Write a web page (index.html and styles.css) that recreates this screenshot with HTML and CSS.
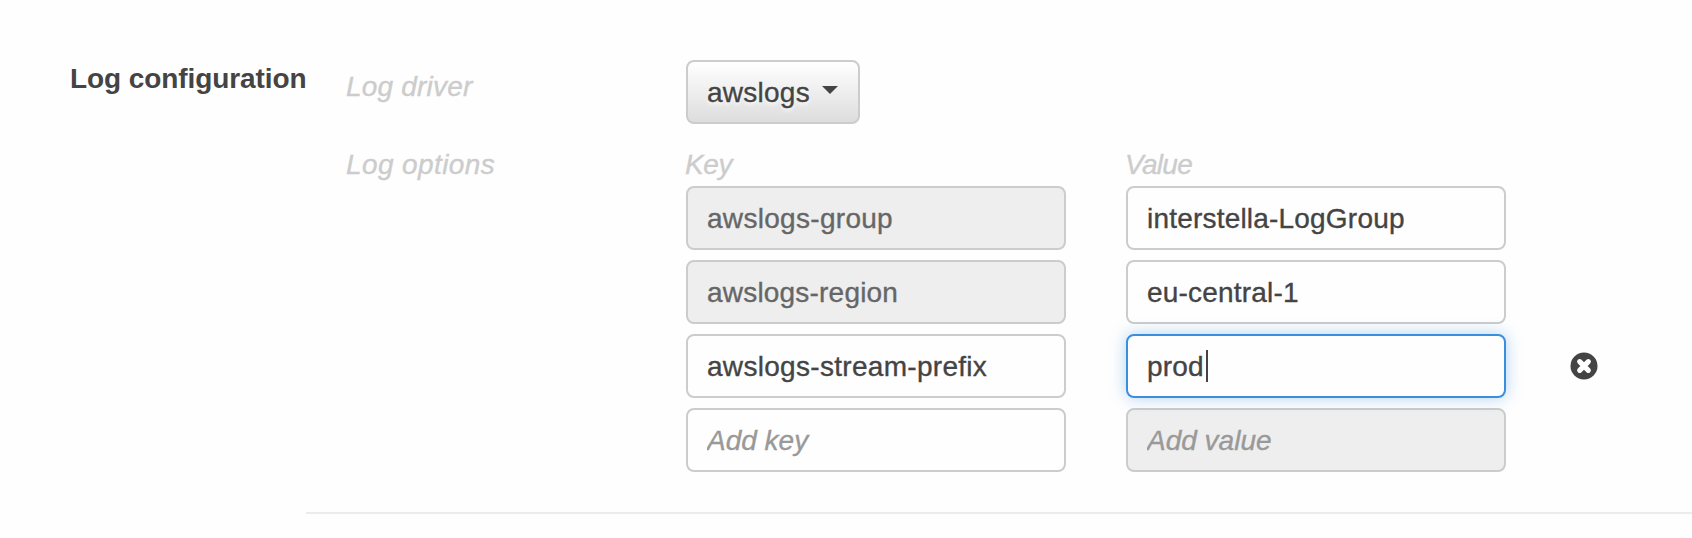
FILE: index.html
```html
<!DOCTYPE html>
<html lang="en">
<head>
<meta charset="utf-8">
<title>Log configuration</title>
<link rel="stylesheet" href="styles.css">
</head>
<body>
<section class="log-config">
  <h2 class="section-title">Log configuration</h2>
  <div class="settings">
    <div class="row driver-row">
      <div class="hint driver-label">Log driver</div>
      <button class="driver-button" type="button"><span class="driver-name">awslogs</span><svg class="arrow" width="16" height="8" viewBox="0 0 16 8"><path d="M0 0H16L8 8Z" fill="#444"/></svg></button>
    </div>
    <div class="row">
      <div class="hint options-label">Log options</div>
      <div class="options">
        <div class="hint key-head">Key</div>
        <div class="hint value-head">Value</div>
        <span></span>
        <input class="field group" value="awslogs-group" disabled>
        <input class="field interstella" value="interstella-LogGroup">
        <span></span>
        <input class="field region" value="awslogs-region" disabled>
        <input class="field central" value="eu-central-1">
        <span></span>
        <input class="field prefix" value="awslogs-stream-prefix">
        <div class="editing">
          <input class="field active" value="prod">
          <span class="caret"></span>
        </div>
        <svg class="remove" width="28" height="28" viewBox="0 0 28 28"><circle cx="14" cy="14" r="13.5" fill="#444"/><path d="M9.700 9.700L18.300 18.300M18.300 9.700L9.700 18.300" stroke="#fff" stroke-width="5.200" stroke-linecap="round"/></svg>
        <input class="field add-key" placeholder="Add key">
        <input class="field add-value" placeholder="Add value" disabled>
        <span></span>
      </div>
    </div>
  </div>
</section>
</body>
</html>
```
FILE: styles.css
```css
* {
  box-sizing: border-box;
}

body {
  margin: 0;
  background: #fefefe;
  color: #444;
  font: 28px/32px "Liberation Sans", Arial, sans-serif;
  -webkit-text-stroke: 0.35px;
}

.log-config {
  display: grid;
  grid-template-columns: 306px 1fr;
  height: 538px;
}

.section-title {
  margin: 0;
  padding: 63px 0 0 70px;
  font-size: 28px;
  line-height: 32px;
  letter-spacing: -0.08px;
  white-space: nowrap;
  -webkit-text-stroke: 0;
}

.settings {
  height: 514px;
  padding: 60px 0 0 40px;
  border-bottom: 2px solid #ececec;
}

.row {
  display: grid;
  grid-template-columns: 340px 1fr;
  align-items: start;
}

.driver-row {
  height: 88px;
}

.hint {
  color: #ccc;
  font-style: italic;
  white-space: nowrap;
}

.driver-label {
  padding-top: 11px;
  letter-spacing: 0.2px;
}

.options-label {
  padding-top: 1px;
  letter-spacing: 0.4px;
}

.driver-button {
  display: flex;
  align-items: center;
  width: 174px;
  height: 64px;
  padding: 2px 20px 0 19px;
  border: 2px solid #ccc;
  border-radius: 8px;
  background: linear-gradient(#fff, #ddd);
  color: #444;
  font: inherit;
  letter-spacing: 0.25px;
  text-shadow: 0 2px 4px #fff;
}

.driver-name {
  width: 115px;
  text-align: left;
}

.arrow {
  margin-top: -7px;
}

.options {
  display: grid;
  grid-template-columns: 380px 380px 28px;
  grid-template-rows: 28px repeat(4, 64px);
  column-gap: 60px;
  row-gap: 10px;
}

.key-head,
.value-head {
  height: 28px;
  padding-top: 1px;
  margin-left: -1px;
}

.key-head {
  letter-spacing: -0.4px;
}

.value-head {
  letter-spacing: -0.7px;
}

.field {
  width: 380px;
  height: 64px;
  margin: 0;
  padding: 2px 20px 0 19px;
  border: 2px solid #ccc;
  border-radius: 8px;
  outline: 0;
  background: #fefefe;
  color: #444;
  font: inherit;
}

.field:disabled {
  background: #eee;
  color: #666;
}

.field::placeholder {
  color: #999;
  font-style: italic;
  opacity: 1;
}

.group,
.prefix {
  letter-spacing: 0.3px;
}

.interstella,
.region,
.central,
.active {
  letter-spacing: 0.2px;
}

.editing {
  position: relative;
}

.active {
  border-color: #3b8ede;
  box-shadow: 0 0 16px rgba(59, 142, 222, 0.4);
}

.caret {
  position: absolute;
  left: 80px;
  top: 16px;
  width: 2px;
  height: 32px;
  background: #444;
}

.remove {
  align-self: center;
  margin-left: 4px;
}
```
